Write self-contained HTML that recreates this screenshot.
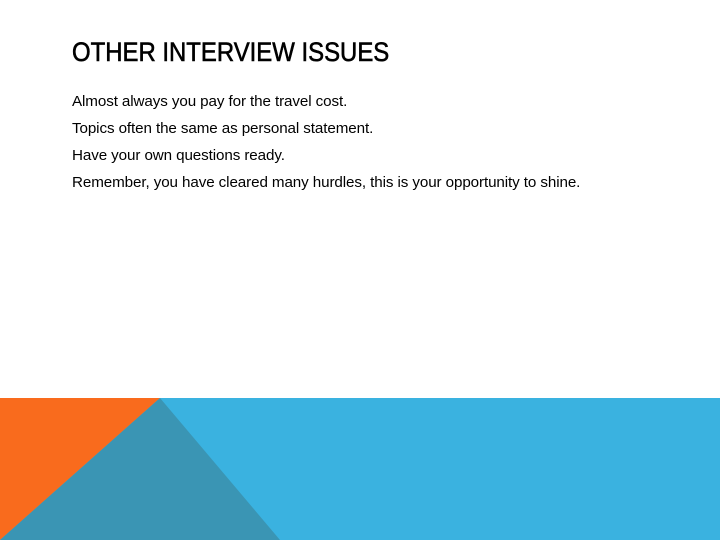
<!DOCTYPE html>
<html><head><style>
html,body{margin:0;padding:0;width:720px;height:540px;overflow:hidden;background:#fff;font-family:"Liberation Sans",sans-serif;color:#000}
h1{position:absolute;left:72px;top:37px;margin:0;font-size:27px;font-weight:normal;-webkit-text-stroke:0.6px #000;letter-spacing:0px;transform:scaleX(0.886);transform-origin:left}
.b{position:absolute;left:72px;font-size:15.2px;letter-spacing:-0.1px}
</style></head><body>
<h1>OTHER INTERVIEW ISSUES</h1>
<div class="b" style="top:93px">Almost always you pay for the travel cost.</div>
<div class="b" style="top:120px">Topics often the same as personal statement.</div>
<div class="b" style="top:147px">Have your own questions ready.</div>
<div class="b" style="top:174px">Remember, you have cleared many hurdles, this is your opportunity to shine.</div>
<svg style="position:absolute;left:0;top:398px" width="720" height="142">
<rect width="720" height="142" fill="#3ab2e0"/>
<polygon points="0,0 160,0 0,142" fill="#f96b1d"/>
<polygon points="160,0 280,142 0,142" fill="#3a95b4"/>
</svg>
</body></html>
